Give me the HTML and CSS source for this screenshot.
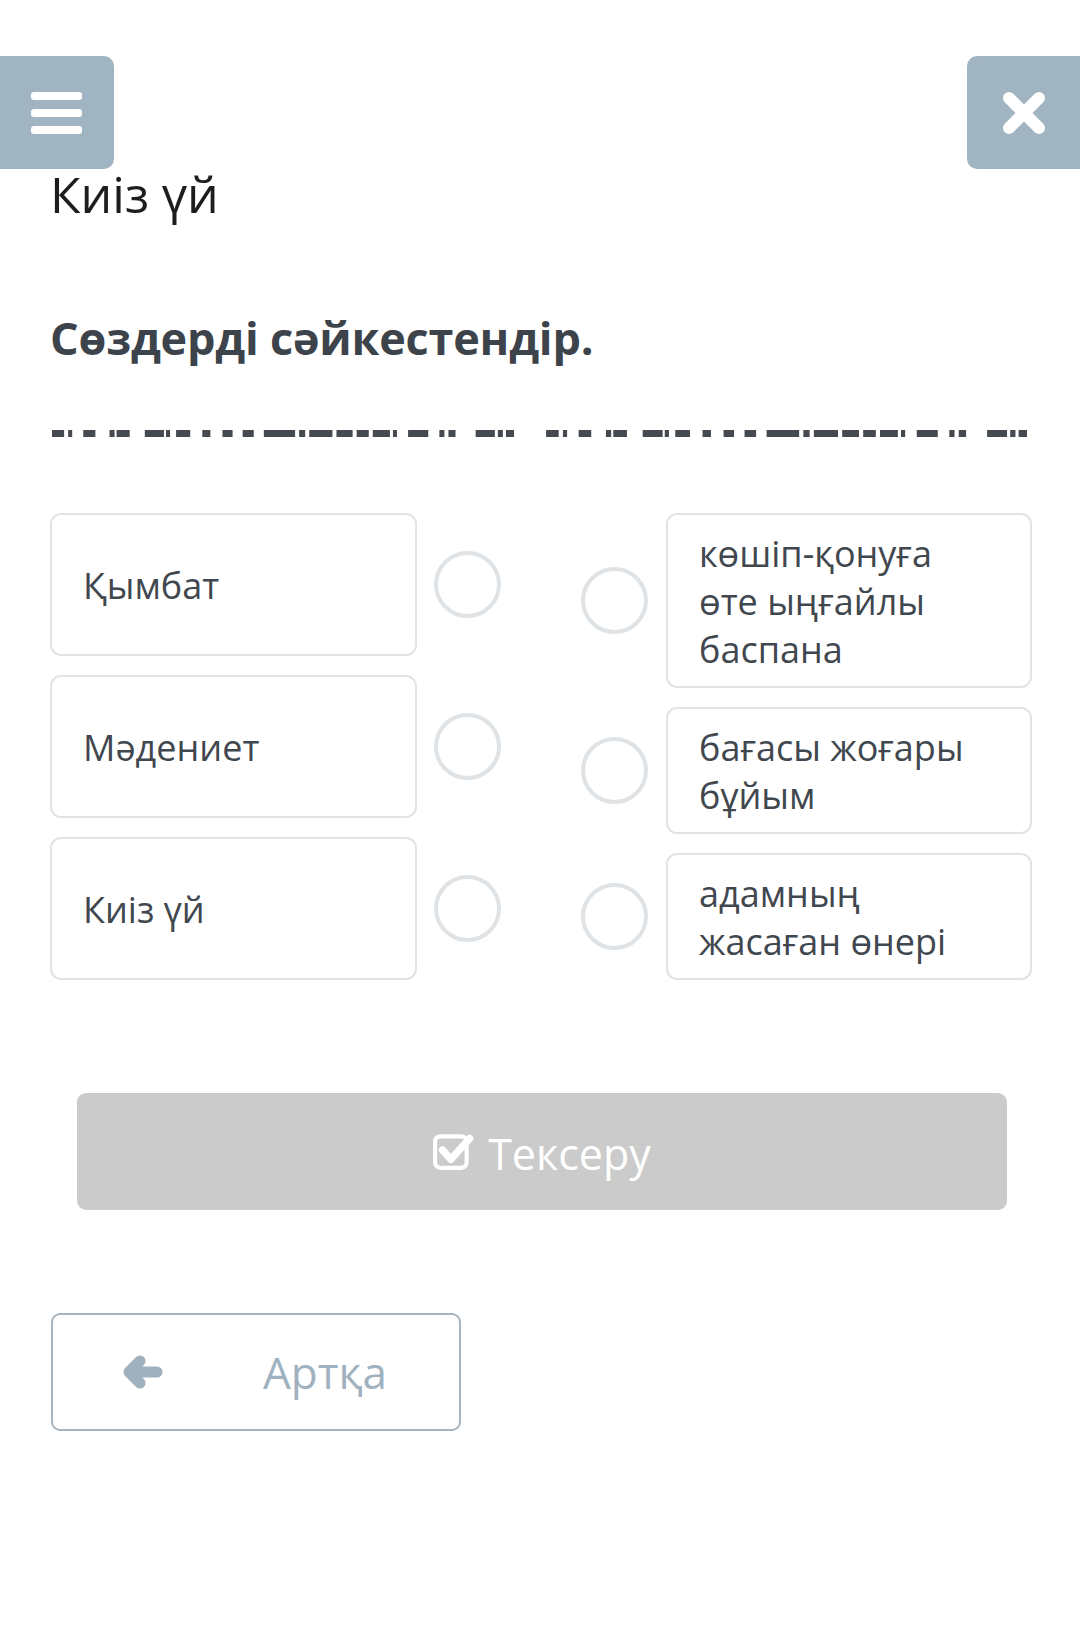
FILE: index.html
```html
<!DOCTYPE html>
<html lang="kk">
<head>
<meta charset="utf-8">
<title>Киіз үй</title>
<link rel="stylesheet" href="styles.css">
</head>
<body>
<button class="corner-btn menu-btn" aria-label="Мәзір">
  <span class="bar"></span><span class="bar"></span><span class="bar"></span>
</button>
<button class="corner-btn close-btn" aria-label="Жабу">
  <svg width="44" height="44" viewBox="0 0 44 44"><path d="M7 7 L37 37 M37 7 L7 37" stroke="#fff" stroke-width="12" stroke-linecap="round" fill="none"/></svg>
</button>

<main class="page">
  <h1 class="title">Киіз үй</h1>
  <h2 class="task">Сөздерді сәйкестендір.</h2>

  <div class="dashes">
    <svg class="dash-seg seg1" viewBox="0 0 460 7" preserveAspectRatio="none"><g fill="#454a51">
      <rect x="2" y="0" width="12" height="7"/><rect x="18" y="0" width="4" height="7"/><rect x="33" y="0" width="12" height="7"/><rect x="59" y="0" width="5" height="7"/><rect x="66" y="0" width="13" height="7"/><rect x="94" y="0" width="19" height="7"/><rect x="115" y="0" width="4" height="7"/><rect x="125" y="0" width="14" height="7"/><rect x="151" y="0" width="8" height="7"/><rect x="171" y="0" width="10" height="7"/><rect x="191" y="0" width="11" height="7"/><rect x="212" y="0" width="31" height="7"/><rect x="247" y="0" width="6" height="7"/><rect x="257" y="0" width="23" height="7"/><rect x="284" y="0" width="16" height="7"/><rect x="304" y="0" width="12" height="7"/><rect x="320" y="0" width="17" height="7"/><rect x="340" y="0" width="4" height="7"/><rect x="355" y="0" width="20" height="7"/><rect x="386" y="0" width="5" height="7"/><rect x="395" y="0" width="7" height="7"/><rect x="422" y="0" width="19" height="7"/><rect x="444" y="0" width="5" height="7"/><rect x="452" y="0" width="8" height="7"/>
    </g></svg>
    <svg class="dash-seg seg2" viewBox="0 0 460 7" preserveAspectRatio="none"><g fill="#454a51">
      <rect x="2" y="0" width="12" height="7"/><rect x="18" y="0" width="4" height="7"/><rect x="33" y="0" width="12" height="7"/><rect x="59" y="0" width="5" height="7"/><rect x="66" y="0" width="13" height="7"/><rect x="94" y="0" width="19" height="7"/><rect x="115" y="0" width="4" height="7"/><rect x="125" y="0" width="14" height="7"/><rect x="151" y="0" width="8" height="7"/><rect x="171" y="0" width="10" height="7"/><rect x="191" y="0" width="11" height="7"/><rect x="212" y="0" width="31" height="7"/><rect x="247" y="0" width="6" height="7"/><rect x="257" y="0" width="23" height="7"/><rect x="284" y="0" width="16" height="7"/><rect x="304" y="0" width="12" height="7"/><rect x="320" y="0" width="17" height="7"/><rect x="340" y="0" width="4" height="7"/><rect x="355" y="0" width="20" height="7"/><rect x="386" y="0" width="5" height="7"/><rect x="395" y="0" width="7" height="7"/><rect x="422" y="0" width="19" height="7"/><rect x="444" y="0" width="5" height="7"/><rect x="452" y="0" width="8" height="7"/>
    </g></svg>
  </div>

  <section class="match">
    <div class="col col-left">
      <div class="row"><div class="card card-left">Қымбат</div><span class="dot"></span></div>
      <div class="row"><div class="card card-left">Мәдениет</div><span class="dot"></span></div>
      <div class="row"><div class="card card-left">Киіз үй</div><span class="dot"></span></div>
    </div>
    <div class="col col-right">
      <div class="row"><span class="dot"></span><div class="card card-right">көшіп-қонуға өте ыңғайлы баспана</div></div>
      <div class="row"><span class="dot"></span><div class="card card-right">бағасы жоғары бұйым</div></div>
      <div class="row"><span class="dot"></span><div class="card card-right">адамның жасаған өнері</div></div>
    </div>
  </section>

  <button class="check-btn">
    <svg class="check-icon" width="42" height="38" viewBox="0 0 40 36"><rect x="2" y="4" width="30" height="30" rx="5" fill="none" stroke="#fff" stroke-width="4"/><path d="M9 17 L17 26 L35 6" fill="none" stroke="#fff" stroke-width="7" stroke-linecap="round" stroke-linejoin="round"/></svg>
    <span>Тексеру</span>
  </button>

  <button class="back-btn">
    <svg class="back-icon" width="40" height="34" viewBox="0 0 40 34"><path d="M6 17 H34 M6 17 L17 6 M6 17 L17 28" fill="none" stroke="#9fb1be" stroke-width="11" stroke-linecap="round" stroke-linejoin="round"/></svg>
    <span>Артқа</span>
  </button>
</main>
</body>
</html>
```

FILE: styles.css
```css
* { box-sizing: border-box; }

html, body {
  margin: 0;
  padding: 0;
  background: #ffffff;
}

body {
  font-family: "Open Sans", "Noto Sans", "DejaVu Sans", sans-serif;
  color: #3f454c;
  width: 1080px;
  min-height: 1649px;
  position: relative;
}

button {
  font-family: inherit;
  cursor: pointer;
}

.corner-btn {
  position: absolute;
  top: 56px;
  width: 113px;
  height: 113px;
  border: none;
  background: #a1b4c1;
  padding: 0;
  display: flex;
  align-items: center;
  justify-content: center;
}

.menu-btn {
  left: 0;
  width: 114px;
  border-radius: 0 10px 10px 0;
  flex-direction: column;
  gap: 9px;
  padding-right: 2px;
}

.menu-btn .bar {
  display: block;
  width: 51px;
  height: 8px;
  background: #ffffff;
  border-radius: 3px;
}

.close-btn {
  right: 0;
  border-radius: 10px 0 0 10px;
  padding-left: 0;
}

.page {
  padding: 164px 48px 0 50px;
}

.title {
  margin: 0;
  font-size: 50px;
  line-height: 60px;
  font-weight: 400;
  color: #1d1d1f;
}

.task {
  margin: 88px 0 0 0;
  font-size: 45px;
  line-height: 52px;
  font-weight: 700;
  color: #3d434a;
  letter-spacing: -0.2px;
}

.dashes {
  margin-top: 66px;
  height: 7px;
  display: flex;
  gap: 30px;
}

.dash-seg { display: block; height: 7px; }
.seg1 { width: 464px; }
.seg2 { width: 483px; }

.match {
  margin-top: 76px;
  display: flex;
  justify-content: space-between;
}

.col {
  display: flex;
  flex-direction: column;
  gap: 19px;
}

.col-left { width: 452px; }
.col-right { width: 451px; }

.row {
  display: flex;
  align-items: center;
}

.col-left .row { gap: 17px; }
.col-right .row { gap: 18px; }

.card {
  border: 2px solid #e3e3e3;
  border-radius: 11px;
  background: #fff;
  font-size: 36px;
  line-height: 48px;
  color: #41474e;
  padding: 0 30px 0 31px;
}

.card-left {
  width: 367px;
  height: 143px;
  display: flex;
  align-items: center;
  padding-top: 2px;
}

.card-right {
  width: 366px;
  padding-top: 15px;
  padding-bottom: 12px;
}

.dot {
  flex: none;
  width: 67px;
  height: 67px;
  border-radius: 50%;
  border: 4px solid #dfe3e6;
  background: #fff;
}

.check-btn {
  margin: 113px 25px 0 27px;
  width: 930px;
  height: 117px;
  display: flex;
  align-items: center;
  justify-content: center;
  gap: 13px;
  background: #cbcbcb;
  border: none;
  border-radius: 9px;
  color: #ffffff;
  font-size: 43px;
  padding: 4px 0 0 0;
}

.check-icon { display: block; margin-top: -6px; }

.back-btn {
  margin-top: 103px;
  margin-left: 1px;
  width: 410px;
  height: 118px;
  display: flex;
  align-items: center;
  gap: 100px;
  padding: 0 0 0 70px;
  background: #fff;
  border: 2px solid #a9b4bc;
  border-radius: 9px;
  color: #a0b2bf;
  font-size: 44px;
}

.back-icon { display: block; }
```
